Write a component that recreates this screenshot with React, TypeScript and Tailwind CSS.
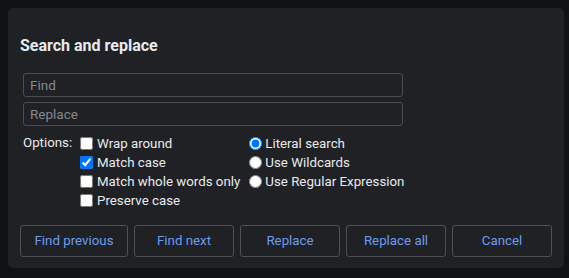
import React from 'react'

const checks = [
  { label: 'Wrap around', checked: false },
  { label: 'Match case', checked: true },
  { label: 'Match whole words only', checked: false },
  { label: 'Preserve case', checked: false },
]

const radios = ['Literal search', 'Use Wildcards', 'Use Regular Expression']

const buttons = [
  { label: 'Find previous', w: 'w-[108px]' },
  { label: 'Find next', w: 'w-[100px]' },
  { label: 'Replace', w: 'w-[100px]' },
  { label: 'Replace all', w: 'w-[100px]' },
  { label: 'Cancel', w: 'w-[100px]' },
]

export default function App() {
  return (
    <div
      className="w-[569px] h-[278px] bg-[#111213] pt-2 pl-2"
      style={{ fontFamily: 'Roboto, "Liberation Sans", sans-serif' }}
    >
      <div className="w-[556px] h-[260px] bg-[#1f2125] rounded-[5px] pl-3 pt-[28px]">
        <h2 className="text-[16px] font-bold text-[#e8eaed] leading-[20px]">Search and replace</h2>

        {/* Campos */}
        <div className="mt-[17px] ml-[3px] flex flex-col gap-[5px]">
          <input
            placeholder="Find"
            className="w-[380px] h-[24px] rounded-[3px] border border-[#4a4c50] bg-transparent px-[6px] text-[13.5px] text-[#e8eaed] placeholder:text-[#85888c] outline-none"
          />
          <input
            placeholder="Replace"
            className="w-[380px] h-[24px] rounded-[3px] border border-[#4a4c50] bg-transparent px-[6px] text-[13.5px] text-[#e8eaed] placeholder:text-[#85888c] outline-none"
          />
        </div>

        {/* Opções */}
        <div className="mt-[8px] ml-[3px] flex text-[13.3px] text-[#e8eaed] leading-[19px]">
          <span className="w-[57px] leading-[17px]">Options:</span>
          <div className="flex flex-col">
            {checks.map((c) => (
              <label key={c.label} className="flex items-center h-[19px]">
                <input type="checkbox" defaultChecked={c.checked} className="m-0 mr-[4px] w-[13px] h-[13px]" />
                {c.label}
              </label>
            ))}
          </div>
          <div className="flex flex-col ml-[9px]">
            {radios.map((r, i) => (
              <label key={r} className="flex items-center h-[19px]">
                <input type="radio" name="mode" defaultChecked={i === 0} className="m-0 mr-[3px] w-[13px] h-[13px]" />
                {r}
              </label>
            ))}
          </div>
        </div>

        {/* Botões */}
        <div className="mt-[15px] flex gap-[6px]">
          {buttons.map((b) => (
            <button
              key={b.label}
              className={`${b.w} h-[32px] rounded-[3px] border border-[#4f5155] bg-[#1f2125] text-[13.3px] text-[#6a9cf1]`}
            >
              {b.label}
            </button>
          ))}
        </div>
      </div>
    </div>
  )
}
